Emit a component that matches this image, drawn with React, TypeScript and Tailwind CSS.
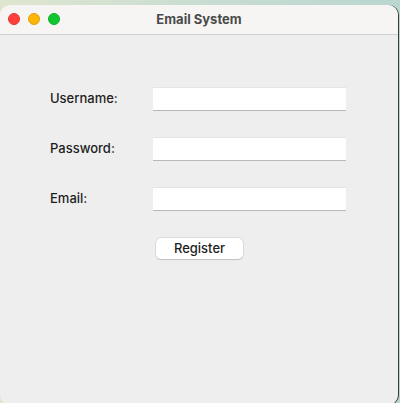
import React from 'react';

const fields = [
  { id: 'username', label: 'Username:', type: 'text' },
  { id: 'password', label: 'Password:', type: 'password' },
  { id: 'email', label: 'Email:', type: 'text' }
];

const App: React.FC = () => {
  return (
    <div className="w-[400px] h-[403px] overflow-hidden bg-gradient-to-r from-[#dfe6cf] via-[#c9ddd2] to-[#b9d6cf]" style={{ fontFamily: 'Inter, "Liberation Sans", sans-serif' }}>
      <div className="mt-[5px] w-[398px] h-[400px] flex flex-col rounded-[10px] overflow-hidden bg-[#eeeeee] shadow-[1px_0_0_#3a3a3a]">
        {/* Title bar */}
        <div className="relative h-[30px] shrink-0 flex items-center justify-center bg-[#f6f5f4] border-b border-[#d0d0d0]">
          <div className="absolute left-[8px] top-[8px] flex gap-[8px]">
            <span className="w-[12px] h-[12px] rounded-full bg-[#fe3f3c] border border-[#e2352f]" />
            <span className="w-[12px] h-[12px] rounded-full bg-[#fdb508] border border-[#e0a00a]" />
            <span className="w-[12px] h-[12px] rounded-full bg-[#12c632] border border-[#0fb02a]" />
          </div>
          <span className="text-[13px] font-bold text-[#4a4a4a]">Email System</span>
        </div>

        {/* Form */}
        <div className="flex flex-col pt-[52px] pl-[50px]">
          {fields.map((f) => (
            <div key={f.id} className="flex items-center h-[24px] mb-[26px]">
              <label htmlFor={f.id} className="w-[103px] shrink-0 text-[13px] font-medium text-[#1e1e1e] whitespace-nowrap">
                {f.label}
              </label>
              <input
                id={f.id}
                type={f.type}
                className="w-[193px] h-[24px] bg-white border-t border-[#e4e4e4] border-b-[1.5px] border-b-[#b8b8b8] outline-none"
              />
            </div>
          ))}
          <div className="flex pl-[106px] mt-[1px]">
            <button className="w-[87px] h-[21px] rounded-[5px] bg-white text-[13px] font-medium text-[#1e1e1e] shadow-[0_0_0_0.5px_#c8c8c8,0_1px_1px_rgba(0,0,0,0.2)]">
              Register
            </button>
          </div>
        </div>
      </div>
    </div>
  );
};

export default App;
